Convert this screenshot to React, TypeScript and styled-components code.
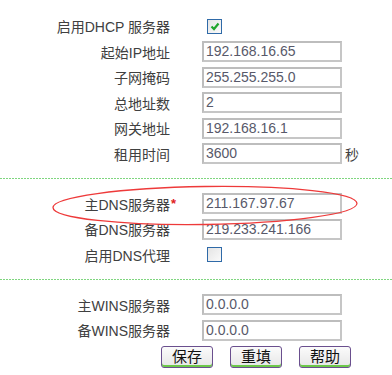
import React from "react";
import styled, { createGlobalStyle } from "styled-components";

const Global = createGlobalStyle`
  html, body { margin: 0; padding: 0; background: #fff; }
  body { font-family: "Liberation Sans", "Noto Sans CJK SC", sans-serif; }
`;

const Page = styled.div`
  width: 392px;
  height: 375px;
  padding-top: 15.5px;
  box-sizing: border-box;
  overflow: hidden;
`;

const Section = styled.div<{ $first?: boolean; $last?: boolean }>`
  position: relative;
  display: flex;
  flex-direction: column;
  gap: 4.5px;
  padding-top: ${(p) => (p.$first ? 0 : 14)}px;
  padding-bottom: ${(p) => (p.$last ? 0 : 14)}px;
`;

const Divider = styled.div`
  height: 1px;
  background-image: linear-gradient(to right, #7fd67f 0, #7fd67f 2px, transparent 2px);
  background-size: 3px 1px;
  background-repeat: repeat-x;
`;

const Row = styled.div`
  display: flex;
  align-items: center;
  height: 21px;
`;

const Label = styled.div`
  position: relative;
  width: 170px;
  flex: none;
  text-align: right;
  font-size: 14px;
  color: #404040;
  white-space: nowrap;
`;

const Star = styled.span`
  position: absolute;
  left: 100%;
  top: 2px;
  margin-left: 1px;
  color: #e02020;
  font-weight: bold;
  font-size: 13px;
`;

const Field = styled.div`
  margin-left: 32px;
  width: 140px;
  height: 21px;
  box-sizing: border-box;
  border: 2px solid #c6c6c6;
  border-top-color: #bdbdbd;
  border-left-color: #bdbdbd;
  background: #fff;
  font-size: 14px;
  line-height: 17px;
  color: #58596a;
  padding-left: 2px;
  white-space: nowrap;
`;

const Suffix = styled.span`
  margin-left: 3px;
  font-size: 14px;
  color: #404040;
`;

const Box = styled.span`
  margin-left: 37px;
  width: 15px;
  height: 15px;
  box-sizing: border-box;
  border: 1.5px solid #2f6aa8;
  background: linear-gradient(135deg, #e4e4e4, #fafafa);
  display: inline-flex;
  align-items: center;
  justify-content: center;
`;

const Buttons = styled.div`
  display: flex;
  gap: 17px;
  padding-left: 161px;
  margin-top: 5px;
`;

const Btn = styled.div`
  width: 52px;
  height: 22px;
  box-sizing: border-box;
  border: 1.5px solid #6a4f8e;
  border-radius: 3px;
  background: linear-gradient(#fbfbfb, #e6e6e6);
  box-shadow: inset 0 -2px 0 #6cc84a;
  font-size: 15px;
  line-height: 19px;
  text-align: center;
  color: #111;
`;

const Ellipse = styled.svg`
  position: absolute;
  left: 50px;
  top: 5px;
  pointer-events: none;
`;

const Check = () => (
  <svg width="10" height="9" viewBox="0 0 10 9">
    <path d="M1.5 4.5 L4 7 L8.5 1.5" fill="none" stroke="#1fa52c" strokeWidth="2.2" />
  </svg>
);

export default function App() {
  return (
    <>
      <Global />
      <Page>
        <Section $first>
          <Row>
            <Label>启用DHCP 服务器</Label>
            <Box><Check /></Box>
          </Row>
          <Row><Label>起始IP地址</Label><Field>192.168.16.65</Field></Row>
          <Row><Label>子网掩码</Label><Field>255.255.255.0</Field></Row>
          <Row><Label>总地址数</Label><Field>2</Field></Row>
          <Row><Label>网关地址</Label><Field>192.168.16.1</Field></Row>
          <Row><Label>租用时间</Label><Field>3600</Field><Suffix>秒</Suffix></Row>
        </Section>
        <Divider />
        <Section>
          <Row><Label>主DNS服务器<Star>*</Star></Label><Field>211.167.97.67</Field></Row>
          <Row><Label>备DNS服务器</Label><Field>219.233.241.166</Field></Row>
          <Row><Label>启用DNS代理</Label><Box /></Row>
          <Ellipse width="312" height="44" viewBox="0 0 312 44">
            <ellipse cx="155" cy="21.5" rx="152" ry="19" fill="none" stroke="#ee3a3a" strokeWidth="1.3" transform="rotate(-0.8 155 21.5)" />
          </Ellipse>
        </Section>
        <Divider />
        <Section $last>
          <Row><Label>主WINS服务器</Label><Field>0.0.0.0</Field></Row>
          <Row><Label>备WINS服务器</Label><Field>0.0.0.0</Field></Row>
        </Section>
        <Buttons>
          <Btn>保存</Btn>
          <Btn>重填</Btn>
          <Btn>帮助</Btn>
        </Buttons>
      </Page>
    </>
  );
}
